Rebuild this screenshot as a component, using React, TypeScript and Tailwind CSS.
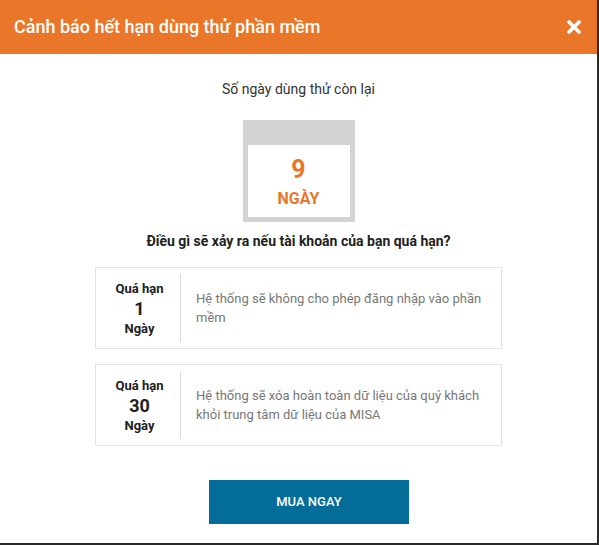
const rules = [
  { days: "1", text: "Hệ thống sẽ không cho phép đăng nhập vào phần mềm" },
  { days: "30", text: "Hệ thống sẽ xóa hoàn toàn dữ liệu của quý khách khỏi trung tâm dữ liệu của MISA" },
];

function RuleCard({ days, text }: { days: string; text: string }) {
  return (
    <div className="flex w-[407px] h-[82px] border border-[#e3e3e3] bg-white">
      <div className="my-[6px] w-[85px] shrink-0 pl-[3px] border-r border-[#dcdcdc] flex flex-col items-center justify-center text-[#212121] font-bold">
        <span className="text-[13px] leading-[19px]">Quá hạn</span>
        <span className="text-[18px] leading-[21px]">{days}</span>
        <span className="text-[13px] leading-[19px]">Ngày</span>
      </div>
      <div className="flex items-center pl-[15px] pr-[16px] text-[13px] leading-[19px] text-[#777]">
        {text}
      </div>
    </div>
  );
}

export default function App() {
  return (
    <div className="w-[599px] h-[545px] bg-[#2a2a2a] font-['Roboto',sans-serif]">
      <div className="w-[597px] h-[543px] bg-white flex flex-col">
        <div className="h-[54px] bg-[#ea7629] flex items-center justify-between pl-[14px] pr-[16px]">
          <h1 className="text-white text-[18px] font-medium leading-none">
            Cảnh báo hết hạn dùng thử phần mềm
          </h1>
          <svg width="14" height="14" viewBox="0 0 14 14" aria-hidden>
            <path d="M2 2 L12 12 M12 2 L2 12" stroke="#fff" strokeWidth="3.6" strokeLinecap="round" />
          </svg>
        </div>

        <div className="flex flex-col items-center">
          <p className="mt-[27px] text-[14px] leading-[17px] text-[#333]">Số ngày dùng thử còn lại</p>

          <div className="mt-[22px] w-[112px] h-[102px] bg-[#d3d3d3] px-[5px] pt-[25px] pb-[5px]">
            <div className="h-full bg-white flex flex-col items-center pt-[11px]">
              <span className="text-[#ea7629] font-bold text-[25px] leading-[28px]">9</span>
              <span className="text-[#ea7629] font-bold text-[16px] leading-[20px] mt-[5px]">NGÀY</span>
            </div>
          </div>

          <p className="mt-[11px] text-[14px] leading-[17px] font-bold text-[#212121]">
            Điều gì sẽ xảy ra nếu tài khoản của bạn quá hạn?
          </p>

          <div className="mt-[17px] flex flex-col gap-[15px]">
            {rules.map((r) => (
              <RuleCard key={r.days} days={r.days} text={r.text} />
            ))}
          </div>

          <button
            type="button"
            className="mt-[34px] ml-[21px] w-[200px] h-[44px] bg-[#036c99] text-white text-[13px] font-medium"
          >
            MUA NGAY
          </button>
        </div>
      </div>
    </div>
  );
}
